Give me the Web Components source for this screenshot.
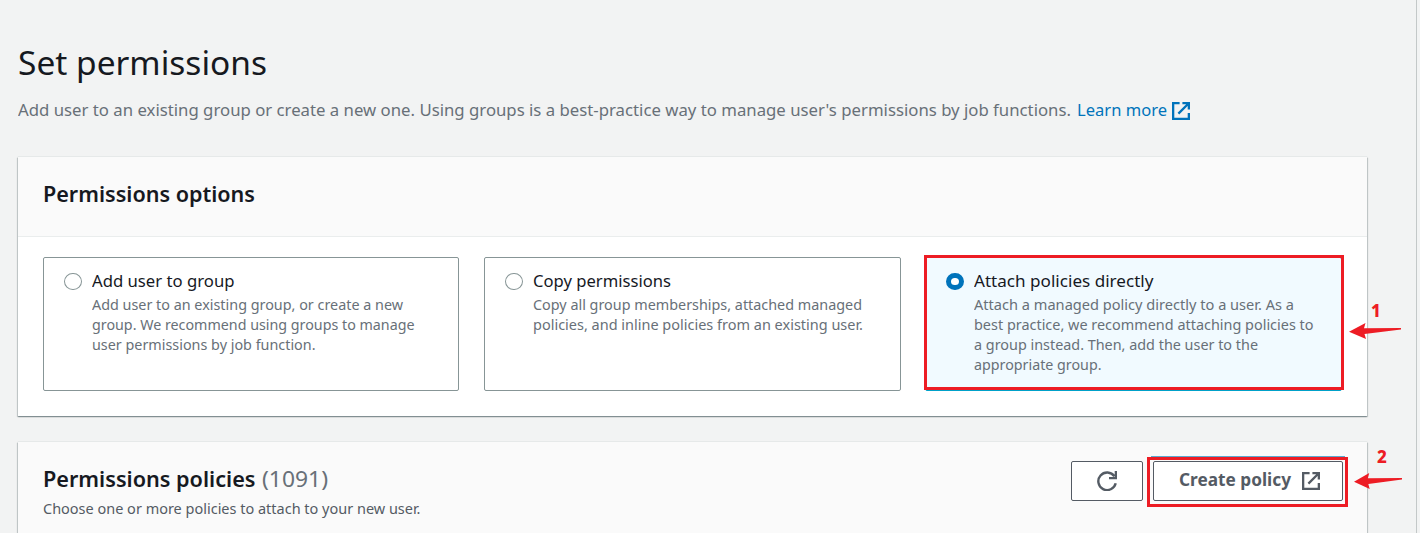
<!DOCTYPE html>
<html lang="en"><head><meta charset="utf-8"><title>Set permissions</title>
<style>
html,body{margin:0;height:100%;overflow:hidden}
body{background:#f2f3f3;color:#16191f;font-family:"Noto Sans","Open Sans",sans-serif}
</style></head><body>
<permissions-page></permissions-page>
<script>
const define=(name,html,init)=>{
  const t=document.createElement('template');t.innerHTML=html;
  customElements.define(name,class extends HTMLElement{
    constructor(){super();this.attachShadow({mode:'open'}).append(t.content.cloneNode(true));}
    connectedCallback(){if(init)init(this,this.shadowRoot);}
  });
};
/* A single line of text condensed or widened to the width in its "w" attribute. */
define('fit-line',`<style>:host{display:block;white-space:nowrap}span{display:inline-block;transform-origin:0 50%}</style><span><slot></slot></span>`,(el,r)=>{
  const w=+el.getAttribute('w'),s=r.querySelector('span');
  el.style.width=w+'px';
  s.style.transform='scaleX('+(w/s.getBoundingClientRect().width)+')';
});
define('external-icon',`<style>:host{display:block;width:18px;height:18px}svg{display:block}</style>
<svg width="18" height="18" viewBox="0 0 18 18" fill="none" stroke="currentColor" stroke-width="2.3"><path d="M7.6 1.15H1.15V16.85H16.85V11M10.4 1.15H16.85V7.6M16.5 1.5L6.4 11.6"/></svg>`);
define('refresh-icon',`<style>:host{display:block;width:20px;height:20px}svg{display:block}</style>
<svg width="20" height="20" viewBox="0 0 20 20" fill="none" stroke="currentColor" stroke-width="2.4"><path d="M18.7 12.3A8.8 8.8 0 1 1 17.4 5.3M18.9 0V7.1H12"/></svg>`);
define('page-intro',`<style>
:host{display:block;padding:39px 0 0 18px}
.t{font-size:33.5px;line-height:46px;height:46px}
.s{display:flex;align-items:center;font-size:17px;line-height:24px;height:24px;color:#687078;margin-top:13px}
a{display:flex;align-items:center;gap:5px;margin-left:6px;color:#0073bb}
external-icon{margin-top:2px}
</style><fit-line class="t" w="249">Set permissions</fit-line>
<div class="s"><fit-line w="1053">Add user to an existing group or create a new one. Using groups is a best-practice way to manage user's permissions by job functions.</fit-line><a><fit-line w="90">Learn more</fit-line><external-icon></external-icon></a></div>`);
define('content-panel',`<style>
:host{display:block;box-sizing:border-box;width:1349px;margin-left:18px;background:#fff;box-shadow:0 0 1px 0 #aab7b8,0 1px 1px 0 rgba(0,28,36,.3),1px 1px 1px 0 rgba(0,28,36,.15),-1px 1px 1px 0 rgba(0,28,36,.15)}
header{box-sizing:border-box;height:var(--head,80px);background:#fafafa;border-bottom:1px solid #eaeded;padding:0 24px 0 25px;display:flex;justify-content:space-between}
</style><header><slot name="head"></slot><slot name="actions"></slot></header><slot></slot>`);
define('option-card',`<style>
:host{display:flex;box-sizing:border-box;height:134px;border:1px solid #879596;border-radius:2px;padding:11px 0 0 20px;gap:10px;background:#fff;position:relative}
:host([selected]){background:#f1faff;border-color:#00a1c9}
i{box-sizing:border-box;flex:none;width:18px;height:17.5px;border:1px solid #879596;border-radius:50%;margin-top:3.5px;background:#fff}
:host([selected]) i{border:5.5px solid #0073bb}
.l{font-size:17px;line-height:24px;height:24px}
.d{font-size:14.8px;line-height:20px;color:#687078;margin-top:1px}
</style><i></i><div><div class="l"><slot name="label"></slot></div><div class="d"><slot></slot></div></div><slot name="mark"></slot>`);
define('tool-button',`<style>:host{display:flex;box-sizing:border-box;height:40px;border:1px solid #545b64;border-radius:2px;background:#fff;color:#545b64;align-items:center;justify-content:center;gap:11px;font-size:17px;font-weight:700;line-height:24px;position:relative}</style><slot></slot>`);
/* Red frame with a numbered arrow, drawn over the control it points at. */
define('call-out',`<style>
:host{position:absolute;box-sizing:border-box;border:3px solid #ed1c24;pointer-events:none}
b{position:absolute;left:calc(100% + var(--nx));top:var(--ny);color:#ed1c24;font:800 17px/20px "Noto Sans",sans-serif}
svg{position:absolute;left:calc(100% + var(--ax));top:var(--ay);width:var(--aw,52px);height:16px}
</style><b><slot></slot></b><svg viewBox="0 0 52 16" preserveAspectRatio="none"><path fill="#ed1c24" d="M0 8.8L16.5 0 15 5.2 52 5V6.4L15.5 11 17 16Z"/></svg>`);
define('permissions-page',`<style>
:host{display:block;box-sizing:border-box;width:1417px;height:533px;overflow:hidden;border-right:1px solid #c3c8c8}
.first{margin-top:35px}
.cards{display:grid;grid-template-columns:416px 417px 417px;column-gap:24.7px;padding:20px 24px 25px 25px}
.second{--head:120px;margin-top:26px}
.ttl{padding-top:22px;font-size:21.8px;line-height:30px;font-weight:600}
.row{display:flex;gap:6.5px}.row+.desc{margin-top:4px}
.count{font-weight:400;color:#687078}
.desc{font-size:14.8px;line-height:20px;font-weight:400;color:#545b64}
.act{display:flex;gap:10px;padding-top:19px}
.refresh{width:72px}.create{width:190px;padding-left:2px}
.create fit-line{margin-top:-2px}
.one{left:-2.400px;top:-3px;width:420px;height:135px;--nx:30px;--ny:43px;--ax:8px;--ay:65px}
.two{left:-7px;top:-5px;width:201px;height:50px;--nx:32px;--ny:-13px;--ax:9px;--ay:13px;--aw:48px}
.glow{position:absolute;left:-3px;right:-3px;top:-6px;height:1px;background:#5ba9cf}
</style>
<page-intro></page-intro>
<content-panel class="first"><fit-line slot="head" class="ttl" w="212">Permissions options</fit-line>
<div class="cards">
<option-card><fit-line slot="label" w="142.500">Add user to group</fit-line><fit-line w="311">Add user to an existing group, or create a new</fit-line><fit-line w="322.500">group. We recommend using groups to manage</fit-line><fit-line w="223.500">user permissions by job function.</fit-line></option-card>
<option-card><fit-line slot="label" w="138">Copy permissions</fit-line><fit-line w="329">Copy all group memberships, attached managed</fit-line><fit-line w="330">policies, and inline policies from an existing user.</fit-line></option-card>
<option-card selected><fit-line slot="label" w="179.500">Attach policies directly</fit-line><fit-line w="320">Attach a managed policy directly to a user. As a</fit-line><fit-line w="339.500">best practice, we recommend attaching policies to</fit-line><fit-line w="284">a group instead. Then, add the user to the</fit-line><fit-line w="127.500">appropriate group.</fit-line><call-out slot="mark" class="one">1</call-out></option-card>
</div></content-panel>
<content-panel class="second"><div slot="head" class="ttl"><div class="row"><fit-line w="212.500">Permissions policies</fit-line><fit-line class="count" w="66">(1091)</fit-line></div><fit-line class="desc" w="377.500">Choose one or more policies to attach to your new user.</fit-line></div>
<div slot="actions" class="act"><tool-button class="refresh"><refresh-icon></refresh-icon></tool-button><tool-button class="create"><fit-line w="112">Create policy</fit-line><external-icon></external-icon><div class="glow"></div><call-out class="two">2</call-out></tool-button></div></content-panel>`);
</script></body></html>
